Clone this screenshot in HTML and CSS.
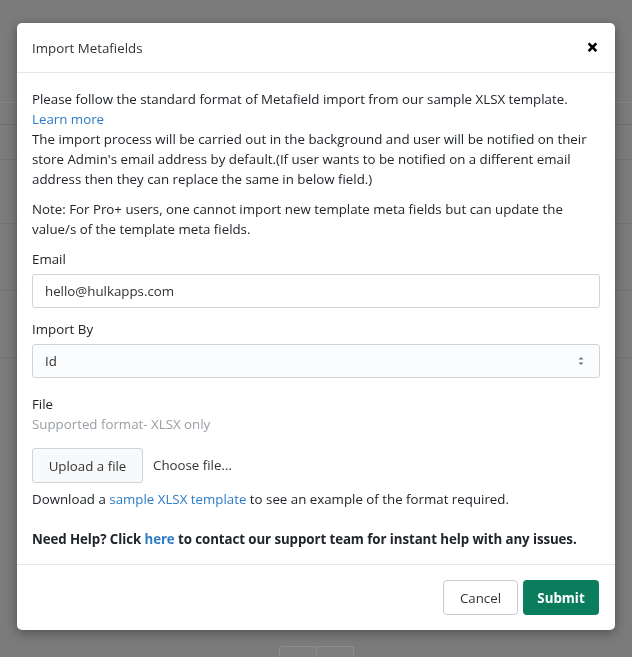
FILE: index.html
```html
<!DOCTYPE html>
<html>
<head>
<meta charset="utf-8">
<link rel="stylesheet" href="styles.css">
</head>
<body>
<div class="page">
  <div class="row r1"></div>
  <div class="row r2"></div>
  <div class="row r3"></div>
  <div class="row r4"></div>
  <div class="row r5"></div>
  <div class="row r6"></div>
  <div class="pager"><span></span><span></span></div>
</div>
<div class="modal">
  <div class="modal-header">
    <span class="modal-title">Import Metafields</span>
    <span class="close">&#x2715;</span>
  </div>
  <div class="modal-body">
    <div class="intro">Please follow the standard format of Metafield import from our sample XLSX template. <a class="link">Learn more</a></div>
    <div class="para">The import process will be carried out in the background and user will be notified on their store Admin's email address by default.(If user wants to be notified on a different email address then they can replace the same in below field.)</div>
    <div class="para note">Note: For Pro+ users, one cannot import new template meta fields but can update the value/s of the template meta fields.</div>
    <div class="group">
      <label class="label">Email</label>
      <div class="input">hello@hulkapps.com</div>
    </div>
    <div class="group">
      <label class="label">Import By</label>
      <div class="input select">Id
        <svg class="arrows" width="8" height="12" viewBox="0 0 8 12"><path d="M1.5 4.5 L4 2 L6.5 4.5 Z M1.5 7.5 L4 10 L6.5 7.5 Z" fill="#6c757d"/></svg>
      </div>
    </div>
    <div class="group file">
      <div class="label">File</div>
      <div class="hint">Supported format- XLSX only</div>
      <div class="upload">
        <span class="btn-upload">Upload a file</span>
        <span class="choose">Choose file...</span>
      </div>
      <div class="download">Download a <a class="link">sample XLSX template</a> to see an example of the format required.</div>
    </div>
    <div class="help">Need Help? Click <a class="link">here</a> to contact our support team for instant help with any issues.</div>
  </div>
  <div class="modal-footer">
    <span class="btn btn-cancel">Cancel</span>
    <span class="btn btn-submit">Submit</span>
  </div>
</div>
</body>
</html>
```
FILE: styles.css
```css
html, body {
  margin: 0;
  padding: 0;
}
body {
  background: #7b7b7b;
  font-family: "Open Sans", "Noto Sans", sans-serif;
  font-size: 13.3px;
  color: #212529;
  width: 632px;
  height: 657px;
  overflow: hidden;
}
.page {
  height: 657px;
  display: flex;
  flex-direction: column;
}
.row {
  border-bottom: 1px solid #727272;
}
.r1 { height: 102px; border-bottom-color: #848484; }
.r2 { height: 21px; border-bottom-color: #6e6e6e; }
.r3 { height: 34px; }
.r4 { height: 63px; }
.r5 { height: 66px; }
.r6 { height: 66px; }
.pager {
  margin-top: auto;
  align-self: center;
  display: flex;
}
.pager span {
  width: 36px;
  height: 10px;
  border: 1px solid #8c8c8c;
  border-bottom: none;
  border-radius: 3px 3px 0 0;
  background: #7e7e7e;
}
.pager span + span {
  margin-left: -1px;
}
.modal {
  position: fixed;
  left: 17px;
  top: 23px;
  width: 598px;
  background: #fff;
  border-radius: 5px;
  box-shadow: 0 3px 12px rgba(0, 0, 0, 0.35);
}
.modal-header {
  height: 50px;
  box-sizing: border-box;
  padding: 0 16px 0 15px;
  display: flex;
  align-items: center;
  justify-content: space-between;
  border-bottom: 1px solid #e6e6e6;
}
.modal-title {
  color: #333;
}
.close {
  font-size: 12.5px;
  font-weight: bold;
  color: #000;
  margin-right: 1px;
  -webkit-text-stroke: 0.8px #000;
}
.modal-body {
  padding: 16px 15px 15px 15px;
  line-height: 20px;
}
.intro, .para {
  color: #212529;
}
.note {
  margin-top: 10px;
}
.link {
  color: #2c7bc7;
  text-decoration: none;
}
.group {
  margin-top: 10px;
}
.label {
  display: block;
  margin-bottom: 5px;
}
.input {
  height: 34px;
  box-sizing: border-box;
  border: 1px solid #ced4da;
  border-radius: 3px;
  padding: 0 12px;
  display: flex;
  align-items: center;
  color: #333;
}
.select {
  background: #fbfcfd;
  justify-content: space-between;
  padding-right: 14px;
}
.group + .group {
  margin-top: 11px;
}
.group.file {
  margin-top: 16px;
}
.file .label {
  margin-bottom: 0;
}
.hint {
  color: #9aa0a6;
}
.upload {
  margin-top: 14px;
  display: flex;
  align-items: center;
}
.btn-upload {
  height: 35px;
  width: 111px;
  box-sizing: border-box;
  border: 1px solid #ced4da;
  border-radius: 3px;
  background: #f8f9fa;
  display: flex;
  align-items: center;
  justify-content: center;
  color: #333;
}
.choose {
  margin-left: 10px;
  margin-top: -2px;
  color: #333;
}
.download {
  margin-top: 6px;
}
.help {
  margin-top: 20px;
  font-weight: bold;
  letter-spacing: -0.08px;
  white-space: nowrap;
}
.modal-footer {
  border-top: 1px solid #e6e6e6;
  height: 66px;
  box-sizing: border-box;
  padding: 0 16px 0 0;
  display: flex;
  align-items: center;
  justify-content: flex-end;
  gap: 5px;
}
.btn {
  height: 35px;
  box-sizing: border-box;
  border-radius: 4px;
  display: flex;
  align-items: center;
  justify-content: center;
}
.btn-cancel {
  width: 75px;
  border: 1px solid #c9cccf;
  color: #333;
  background: #fff;
}
.btn-submit {
  width: 76px;
  background: #0a7d5d;
  color: #fff;
  font-weight: bold;
}
```
